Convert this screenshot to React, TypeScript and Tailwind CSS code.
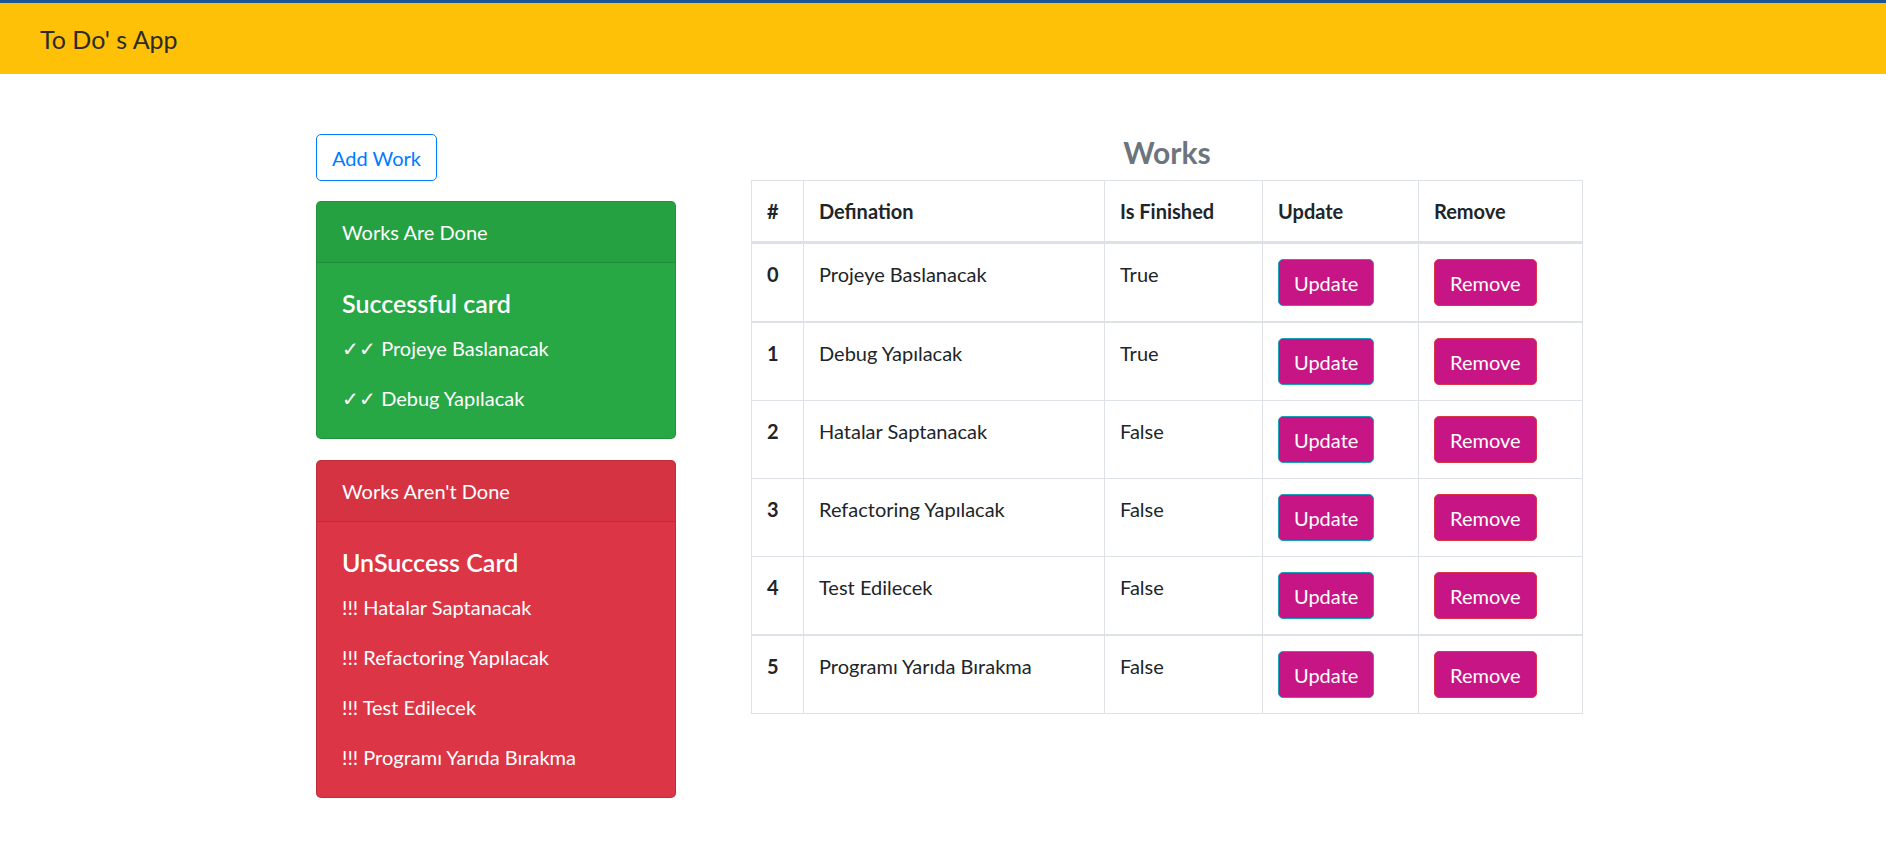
import React from "react";

const works = [
  { id: 0, name: "Projeye Baslanacak", done: true },
  { id: 1, name: "Debug Yapılacak", done: true },
  { id: 2, name: "Hatalar Saptanacak", done: false },
  { id: 3, name: "Refactoring Yapılacak", done: false },
  { id: 4, name: "Test Edilecek", done: false },
  { id: 5, name: "Programı Yarıda Bırakma", done: false },
];

function StatusCard({
  title,
  heading,
  items,
  prefix,
  tone,
}: {
  title: string;
  heading: string;
  items: string[];
  prefix: string;
  tone: "success" | "danger";
}) {
  const cardTone = tone === "success" ? "bg-[#28a745]" : "bg-[#dc3545]";
  return (
    <div className={`w-[360px] overflow-hidden rounded-[5px] border border-black/[0.125] text-white ${cardTone}`}>
      <div className="border-b border-black/[0.125] bg-black/[0.03] px-[25px] py-[15px] text-[20px] leading-[30px]">
        {title}
      </div>
      <div className="p-[25px]">
        <h5 className="mb-[15px] text-[25px] font-semibold leading-[30px]">{heading}</h5>
        {items.map((item, i) => (
          <p
            key={item}
            className={`text-[20px] leading-[30px] ${i === items.length - 1 ? "" : "mb-[20px]"}`}
          >
            {prefix} {item}
          </p>
        ))}
      </div>
    </div>
  );
}

export default function App() {
  const done = works.filter((w) => w.done).map((w) => w.name);
  const notDone = works.filter((w) => !w.done).map((w) => w.name);

  return (
    <div className="min-h-screen bg-white font-['Lato',sans-serif] text-[#212529]">
      {/* Navbar */}
      <nav className="flex h-[74px] items-center border-t-[3px] border-[#1b5596] bg-[#ffc107] pl-[40px]">
        <span className="text-[25px] leading-[38px] text-[#2b2b2b]">To Do' s App</span>
      </nav>

      <div className="flex items-start gap-[75px] pl-[316px] pt-[60px]">
        {/* Left column */}
        <div className="flex w-[360px] flex-col">
          <div>
            <button
              type="button"
              className="rounded-[5px] border border-[#007bff] bg-white px-[15px] py-[7.5px] text-[20px] leading-[30px] text-[#007bff]"
            >
              Add Work
            </button>
          </div>
          <div className="mt-[20px]">
            <StatusCard
              title="Works Are Done"
              heading="Successful card"
              items={done}
              prefix="✓✓"
              tone="success"
            />
          </div>
          <div className="mt-[21px]">
            <StatusCard
              title="Works Aren't Done"
              heading="UnSuccess Card"
              items={notDone}
              prefix="!!!"
              tone="danger"
            />
          </div>
        </div>

        {/* Works table */}
        <div className="w-[832px]">
          <h4 className="mb-[10px] text-center text-[30px] font-bold leading-[36px] text-[#6c757d]">
            Works
          </h4>
          <table className="w-full table-fixed border-collapse border border-[#dee2e6] text-left text-[20px] leading-[30px]">
            <thead>
              <tr>
                <th className="w-[52px] border border-b-[3px] border-[#dee2e6] p-[15px] font-bold">#</th>
                <th className="w-[301px] border border-b-[3px] border-[#dee2e6] p-[15px] font-bold">Defination</th>
                <th className="w-[158px] border border-b-[3px] border-[#dee2e6] p-[15px] font-bold">Is Finished</th>
                <th className="w-[156px] border border-b-[3px] border-[#dee2e6] p-[15px] font-bold">Update</th>
                <th className="border border-b-[3px] border-[#dee2e6] p-[15px] font-bold">Remove</th>
              </tr>
            </thead>
            <tbody>
              {works.map((w) => {
                const thick = w.id === 1 || w.id === 5;
                const cell = `border border-[#dee2e6] p-[15px] align-top ${thick ? "border-t-2" : ""}`;
                return (
                  <tr key={w.id}>
                    <th className={`${cell} font-bold`}>{w.id}</th>
                    <td className={cell}>{w.name}</td>
                    <td className={cell}>{w.done ? "True" : "False"}</td>
                    <td className={cell}>
                      <button
                        type="button"
                        className="rounded-[5px] border border-[#17a2b8] bg-[#c71585] px-[15px] py-[7.5px] text-[20px] leading-[30px] text-white"
                      >
                        Update
                      </button>
                    </td>
                    <td className={cell}>
                      <button
                        type="button"
                        className="rounded-[5px] border border-[#dc3545] bg-[#c71585] px-[15px] py-[7.5px] text-[20px] leading-[30px] text-white"
                      >
                        Remove
                      </button>
                    </td>
                  </tr>
                );
              })}
            </tbody>
          </table>
        </div>
      </div>
    </div>
  );
}
